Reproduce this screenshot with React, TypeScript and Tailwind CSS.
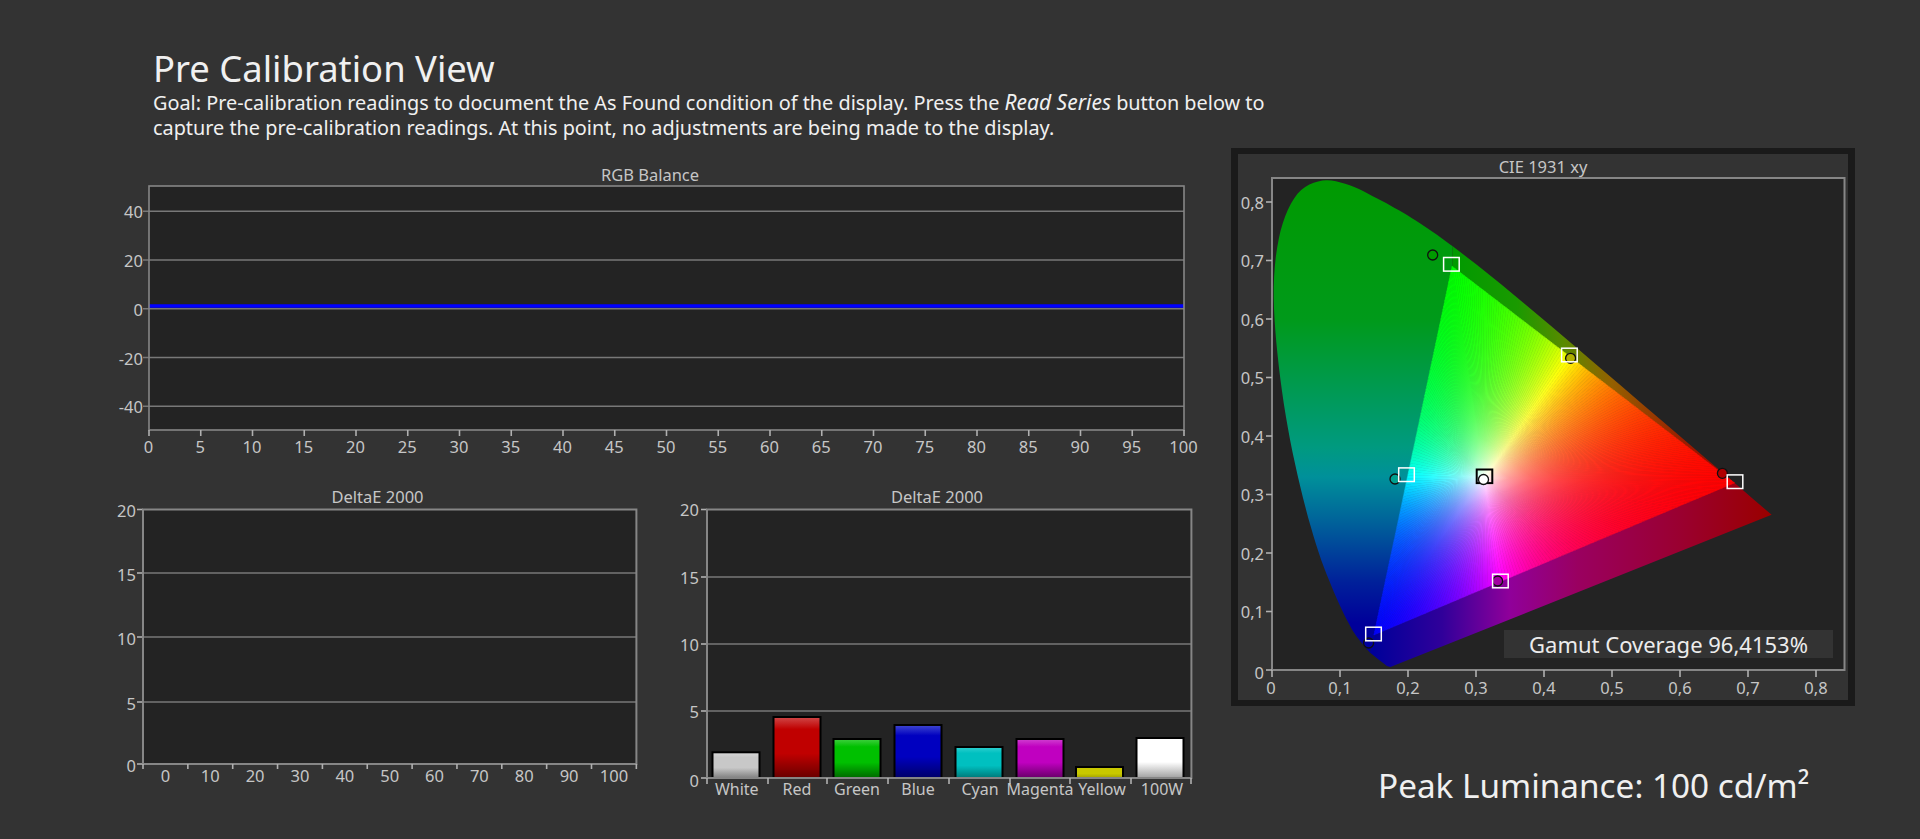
import React from "react";

const TICK = "fill-[#c6c6c6]";
const GRID = "#787878";
const FRAME = "#868686";
const PLOT = "#232323";

type V = [number, number];
const PX = (v: number) => 1272 + 680 * v;
const PY = (v: number) => 670 - 585 * v;
const P = ([x, y]: V): V => [PX(x), PY(y)];
const pts = (a: V[]) => a.map((p) => P(p).map((n) => n.toFixed(1)).join(",")).join(" ");

const R: V = [0.68, 0.32];
const G: V = [0.265, 0.69];
const B: V = [0.15, 0.06];
const W: V = [0.3127, 0.329];

function bary(p: V): [number, number, number] {
  const d = (G[1] - B[1]) * (R[0] - B[0]) + (B[0] - G[0]) * (R[1] - B[1]);
  const a = ((G[1] - B[1]) * (p[0] - B[0]) + (B[0] - G[0]) * (p[1] - B[1])) / d;
  const b = ((B[1] - R[1]) * (p[0] - B[0]) + (R[0] - B[0]) * (p[1] - B[1])) / d;
  return [a, b, 1 - a - b];
}
const bw = bary(W);
function colorAt(p: V): string {
  const c = bary(p).map((v, i) => Math.max(0, v / bw[i]));
  const m = Math.max(...c) || 1;
  return `rgb(${c.map((v) => Math.round(Math.pow(v / m, 1.3) * 255)).join(",")})`;
}
const lerp = (a: V, b: V, t: number): V => [a[0] + (b[0] - a[0]) * t, a[1] + (b[1] - a[1]) * t];

function smooth(a: V[], steps = 6): V[] {
  const out: V[] = [];
  for (let i = 0; i < a.length - 1; i++) {
    const p0 = a[Math.max(0, i - 1)];
    const p1 = a[i];
    const p2 = a[i + 1];
    const p3 = a[Math.min(a.length - 1, i + 2)];
    for (let s = 0; s < steps; s++) {
      const t = s / steps;
      const f = (k: 0 | 1) =>
        0.5 * (2 * p1[k] + (p2[k] - p0[k]) * t + (2 * p0[k] - 5 * p1[k] + 4 * p2[k] - p3[k]) * t * t + (3 * p1[k] - p0[k] - 3 * p2[k] + p3[k]) * t * t * t);
      out.push([f(0), f(1)]);
    }
  }
  out.push(a[a.length - 1]);
  return out;
}

const N = 120;
const rim: V[] = [];
[[R, G], [G, B], [B, R]].forEach(([a, b]) => {
  for (let i = 0; i < N; i++) rim.push(lerp(a, b, i / N));
});
const sectors = rim.map((a, i) => {
  const b = rim[(i + 1) % rim.length];
  return { a, b, mid: lerp(a, b, 0.5), id: `s${i}` };
});

const lobe: V[] = [B, ...smooth([[0.144, 0.0297], [0.1241, 0.0578], [0.1096, 0.0868], [0.0913, 0.1327], [0.0687, 0.2007], [0.0454, 0.295], [0.0235, 0.4127], [0.0082, 0.5384], [0.0025, 0.6548], [0.0125, 0.7502], [0.0375, 0.814], [0.0743, 0.8365], [0.1142, 0.8285], [0.1547, 0.8059], [0.1929, 0.7816], [0.2296, 0.7543], [0.2658, 0.7243]]), G];
const sliver: V[] = [G, [0.2658, 0.7243], [0.3016, 0.6923], [0.3373, 0.6589], [0.3731, 0.6245], [0.4087, 0.5896], [0.4441, 0.5547], [0.4788, 0.5202], [0.5125, 0.4866], [0.5448, 0.4544], [0.5752, 0.4242], [0.627, 0.3725], [0.6658, 0.334], [0.6915, 0.3083], R];
const band: V[] = [B, R, [0.6915, 0.3083], [0.7079, 0.292], [0.726, 0.274], [0.7347, 0.2653], [0.1741, 0.005], [0.1689, 0.0069], [0.1644, 0.0109], [0.1566, 0.0177], [0.144, 0.0297]];

const lobeStops: [number, string][] = [[0.84, "#009a00"], [0.6, "#009a1a"], [0.45, "#009a60"], [0.38, "#009a80"], [0.33, "#00909a"], [0.25, "#00609a"], [0.15, "#00209a"], [0.08, "#00009a"]];
const sliverStops: [number, string][] = [[0.265, "#009a00"], [0.36, "#1a9a00"], [0.43, "#5a8a00"], [0.5, "#946000"], [0.6, "#9a2000"], [0.68, "#9a0000"]];
const bandStops: [number, string][] = [[0.15, "#00009a"], [0.25, "#30009a"], [0.35, "#90009a"], [0.45, "#9a0060"], [0.6, "#9a0030"], [0.73, "#9a0000"]];

function Label({ x, y, a = "middle", s = 16.5, children }: { x: number; y: number; a?: "start" | "middle" | "end"; s?: number; children: React.ReactNode }) {
  return (
    <text x={x} y={y} textAnchor={a} dominantBaseline="central" fontSize={s} className={TICK}>
      {children}
    </text>
  );
}

function RgbChart() {
  const yOf = (v: number) => 308.8 - 2.4375 * v;
  return (
    <svg viewBox="100 155 1100 305" width={1100} height={305} className="block ml-[100px] mt-[15px]">
      <Label x={650} y={174}>RGB Balance</Label>
      <rect x={149} y={186} width={1035} height={244} fill={PLOT} />
      {[40, 20, 0, -20, -40].map((v) => (
        <g key={v}>
          <line x1={143} x2={1184} y1={yOf(v)} y2={yOf(v)} stroke={GRID} strokeWidth={1.6} />
          <Label x={143} y={yOf(v) + 0.5} a="end">{v}</Label>
        </g>
      ))}
      <line x1={149} x2={1184} y1={306} y2={306} stroke="#0000ff" strokeWidth={3.6} />
      <rect x={149} y={186} width={1035} height={244} fill="none" stroke={FRAME} strokeWidth={1.6} />
      {Array.from({ length: 21 }, (_, i) => i * 5).map((v) => {
        const x = 149 + v * 10.35;
        return (
          <g key={v}>
            <line x1={x} x2={x} y1={430} y2={436} stroke="#b0b0b0" strokeWidth={1.6} />
            <Label x={x - 0.5} y={446}>{v}</Label>
          </g>
        );
      })}
    </svg>
  );
}

function LeftDelta() {
  const lines: [number, number][] = [[15, 573], [10, 637], [5, 702], [20, 509.5], [0, 764]];
  const ticks = Array.from({ length: 12 }, (_, i) => 143 + i * 44.85);
  const labels = ["0", "10", "20", "30", "40", "50", "60", "70", "80", "90", "100"];
  return (
    <svg viewBox="100 480 550 330" width={550} height={330} className="block shrink-0">
      <Label x={377.5} y={496.5}>DeltaE 2000</Label>
      <rect x={143} y={509.5} width={493.4} height={254.5} fill={PLOT} />
      {lines.map(([v, y]) => (
        <g key={v}>
          <line x1={137} x2={143} y1={y} y2={y} stroke="#b0b0b0" strokeWidth={1.6} />
          {v !== 20 && v !== 0 && <line x1={143} x2={636} y1={y} y2={y} stroke={GRID} strokeWidth={1.6} />}
          <Label x={136} y={y + 1} a="end">{v}</Label>
        </g>
      ))}
      <rect x={143} y={509.5} width={493.4} height={254.5} fill="none" stroke={FRAME} strokeWidth={2} />
      {ticks.map((x) => (
        <line key={x} x1={x} x2={x} y1={764} y2={769} stroke="#b0b0b0" strokeWidth={1.6} />
      ))}
      {labels.map((l, i) => (
        <Label key={l} x={143 + (i + 0.5) * 44.85} y={775}>{l}</Label>
      ))}
    </svg>
  );
}

const bars = [
  { n: "White", x: 712.5, c: 736.8, top: 752.3, id: "bw", col: "#c8c8c8", hi: "#d8d8d8", lo: "#808080" },
  { n: "Red", x: 773.5, c: 797, top: 717, id: "br", col: "#c00000", hi: "#d04848", lo: "#680000" },
  { n: "Green", x: 833.5, c: 857, top: 739, id: "bg", col: "#00c000", hi: "#40d040", lo: "#006800" },
  { n: "Blue", x: 894.5, c: 918, top: 725, id: "bb", col: "#0000c0", hi: "#4048d0", lo: "#000068" },
  { n: "Cyan", x: 955.5, c: 980, top: 747, id: "bc", col: "#00c0c0", hi: "#30d0d0", lo: "#007878" },
  { n: "Magenta", x: 1016.5, c: 1040, top: 739, id: "bm", col: "#c000c0", hi: "#d040d0", lo: "#680068" },
  { n: "Yellow", x: 1076, c: 1102, top: 767, id: "by", col: "#c8c800", hi: "#c8c800", lo: "#a0a000" },
  { n: "100W", x: 1136.5, c: 1162, top: 738, id: "bh", col: "#ffffff", hi: "#ffffff", lo: "#a0a0a0" },
];

function RightDelta() {
  const lines: [number, number][] = [[15, 577], [10, 644], [5, 711], [20, 509.5], [0, 778]];
  const ticks = [707, 768, 827, 888, 949, 1010, 1070, 1131, 1191];
  return (
    <svg viewBox="650 480 555 330" width={555} height={330} className="block shrink-0">
      <defs>
        {bars.map((b) => (
          <linearGradient key={b.id} id={b.id} x1="0" y1="0" x2="0" y2="1">
            <stop offset="0" stopColor={b.hi} />
            <stop offset="0.2" stopColor={b.col} />
            <stop offset="0.6" stopColor={b.col} />
            <stop offset="1" stopColor={b.lo} />
          </linearGradient>
        ))}
      </defs>
      <Label x={937} y={496.5}>DeltaE 2000</Label>
      <rect x={707} y={509.5} width={484.4} height={268.5} fill={PLOT} />
      {lines.map(([v, y]) => (
        <g key={v}>
          <line x1={701} x2={707} y1={y} y2={y} stroke="#b0b0b0" strokeWidth={1.6} />
          {v !== 20 && v !== 0 && <line x1={707} x2={1191} y1={y} y2={y} stroke={GRID} strokeWidth={1.6} />}
          <Label x={699} y={v === 0 ? 780 : y} a="end">{v}</Label>
        </g>
      ))}
      {bars.map((b) => (
        <rect key={b.id} x={b.x} y={b.top} width={47} height={778 - b.top} fill={`url(#${b.id})`} stroke="#000000" strokeWidth={2} />
      ))}
      <rect x={707} y={509.5} width={484.4} height={268.5} fill="none" stroke={FRAME} strokeWidth={2} />
      {ticks.map((x) => (
        <line key={x} x1={x} x2={x} y1={778} y2={784} stroke="#b0b0b0" strokeWidth={1.6} />
      ))}
      {bars.map((b) => (
        <Label key={b.id} x={b.c} y={789} s={16}>{b.n}</Label>
      ))}
    </svg>
  );
}

function Circle({ at, fill }: { at: V; fill: string }) {
  return <circle cx={at[0]} cy={at[1]} r={5} fill={fill} stroke="#101010" strokeWidth={1.3} />;
}
function Square({ cx, cy, dark }: { cx: number; cy: number; dark?: boolean }) {
  return <rect x={cx - 7.8} y={cy - 6.8} width={15.6} height={13.6} fill="none" stroke={dark ? "#000000" : "#ffffff"} strokeWidth={dark ? 2 : 1.5} />;
}

function Grad({ id, axis, stops, f }: { id: string; axis: "x" | "y"; stops: [number, string][]; f: (v: number) => number }) {
  const a = f(stops[0][0]);
  const b = f(stops[stops.length - 1][0]);
  return (
    <linearGradient id={id} gradientUnits="userSpaceOnUse" x1={axis === "x" ? a : 0} x2={axis === "x" ? b : 0} y1={axis === "y" ? a : 0} y2={axis === "y" ? b : 0}>
      {stops.map(([v, c]) => (
        <stop key={v} offset={(f(v) - a) / (b - a)} stopColor={c} />
      ))}
    </linearGradient>
  );
}

function CiePanel() {
  const W2 = P(W);
  return (
    <div className="box-border w-[624px] h-[558px] border-x-[7px] border-y-[6px] border-[#1a1a1a] bg-[#333333]">
      <svg viewBox="1238 154 610 546" width={610} height={546} className="block">
        <defs>
          <Grad id="lobe" axis="y" stops={lobeStops} f={PY} />
          <Grad id="sliver" axis="x" stops={sliverStops} f={PX} />
          <Grad id="band" axis="x" stops={bandStops} f={PX} />
          {sectors.map((s) => {
            const e = P(s.mid);
            return (
              <linearGradient key={s.id} id={s.id} gradientUnits="userSpaceOnUse" x1={W2[0]} y1={W2[1]} x2={e[0]} y2={e[1]}>
                {[0, 0.1, 0.2, 0.3, 0.4, 0.5, 0.6, 0.7, 0.8, 0.9, 1].map((t) => (
                  <stop key={t} offset={t} stopColor={colorAt(lerp(W, s.mid, t))} />
                ))}
              </linearGradient>
            );
          })}
        </defs>
        <Label x={1543} y={166.5}>CIE 1931 xy</Label>
        <rect x={1272} y={178} width={572.5} height={492} fill={PLOT} stroke={FRAME} strokeWidth={2} />
        <polygon points={pts(lobe)} fill="url(#lobe)" />
        <polygon points={pts(sliver)} fill="url(#sliver)" />
        <polygon points={pts(band)} fill="url(#band)" />
        {sectors.map((s) => (
          <polygon key={s.id} points={pts([W, s.a, s.b])} fill={`url(#${s.id})`} stroke={`url(#${s.id})`} strokeWidth={0.6} />
        ))}
        {[0, 0.1, 0.2, 0.3, 0.4, 0.5, 0.6, 0.7, 0.8].map((v) => {
          const t = v === 0 ? "0" : v.toFixed(1).replace(".", ",");
          return (
            <g key={v}>
              <line x1={1266} x2={1272} y1={PY(v)} y2={PY(v)} stroke="#b0b0b0" strokeWidth={1.6} />
              <line x1={PX(v)} x2={PX(v)} y1={670} y2={677} stroke="#b0b0b0" strokeWidth={1.6} />
              <Label x={1264} y={v === 0 ? 672 : PY(v)} a="end">{t}</Label>
              <Label x={v === 0 ? 1271 : PX(v)} y={687}>{t}</Label>
            </g>
          );
        })}
        <Circle at={[1432.7, 255]} fill="#009a00" />
        <Circle at={[1570.6, 358.3]} fill="#b0b000" />
        <Circle at={[1395, 479]} fill="#00a090" />
        <Circle at={[1722.4, 473.3]} fill="#b00000" />
        <Circle at={[1497.6, 581]} fill="#a000a0" />
        <Circle at={[1368.6, 643]} fill="#0000a0" />
        <Square cx={1451.4} cy={264.3} />
        <Square cx={1569.4} cy={355} />
        <Square cx={1406.5} cy={474.7} />
        <Square cx={1735} cy={481.7} />
        <Square cx={1500.4} cy={581} />
        <Square cx={1373.5} cy={634} />
        <Square cx={1484.5} cy={476.3} dark />
        <Circle at={[1483.5, 479.5]} fill="#ffffff" />
        <rect x={1504} y={630} width={329} height={28} fill="#333333" />
        <text x={1668.5} y={643.5} textAnchor="middle" dominantBaseline="central" fontSize={22} className="fill-[#ececec]">
          Gamut Coverage 96,4153%
        </text>
      </svg>
    </div>
  );
}

export default function App() {
  return (
    <div className="flex w-[1920px] h-[839px] overflow-hidden bg-[#333333] font-['Noto_Sans',sans-serif]">
      <div className="flex flex-col w-[1231px] shrink-0">
        <div className="pt-[46px] pl-[153px] text-[#f0f0f0] whitespace-nowrap">
          <h1 className="text-[36.4px] leading-[44px] font-normal">Pre Calibration View</h1>
          <p className="text-[19.85px] leading-[25px]">
            Goal: Pre-calibration readings to document the As Found condition of the display. Press the <em className="text-[21px]">Read Series</em> button below to
            <br />
            capture the pre-calibration readings. At this point, no adjustments are being made to the display.
          </p>
        </div>
        <RgbChart />
        <div className="flex ml-[100px] mt-[20px]">
          <LeftDelta />
          <RightDelta />
        </div>
      </div>
      <div className="flex flex-col w-[624px] shrink-0 pt-[148px]">
        <CiePanel />
        <div className="mt-[59px] ml-[147px] text-[33.3px] leading-[40px] text-[#f0f0f0] whitespace-nowrap">Peak Luminance: 100 cd/m²</div>
      </div>
    </div>
  );
}
